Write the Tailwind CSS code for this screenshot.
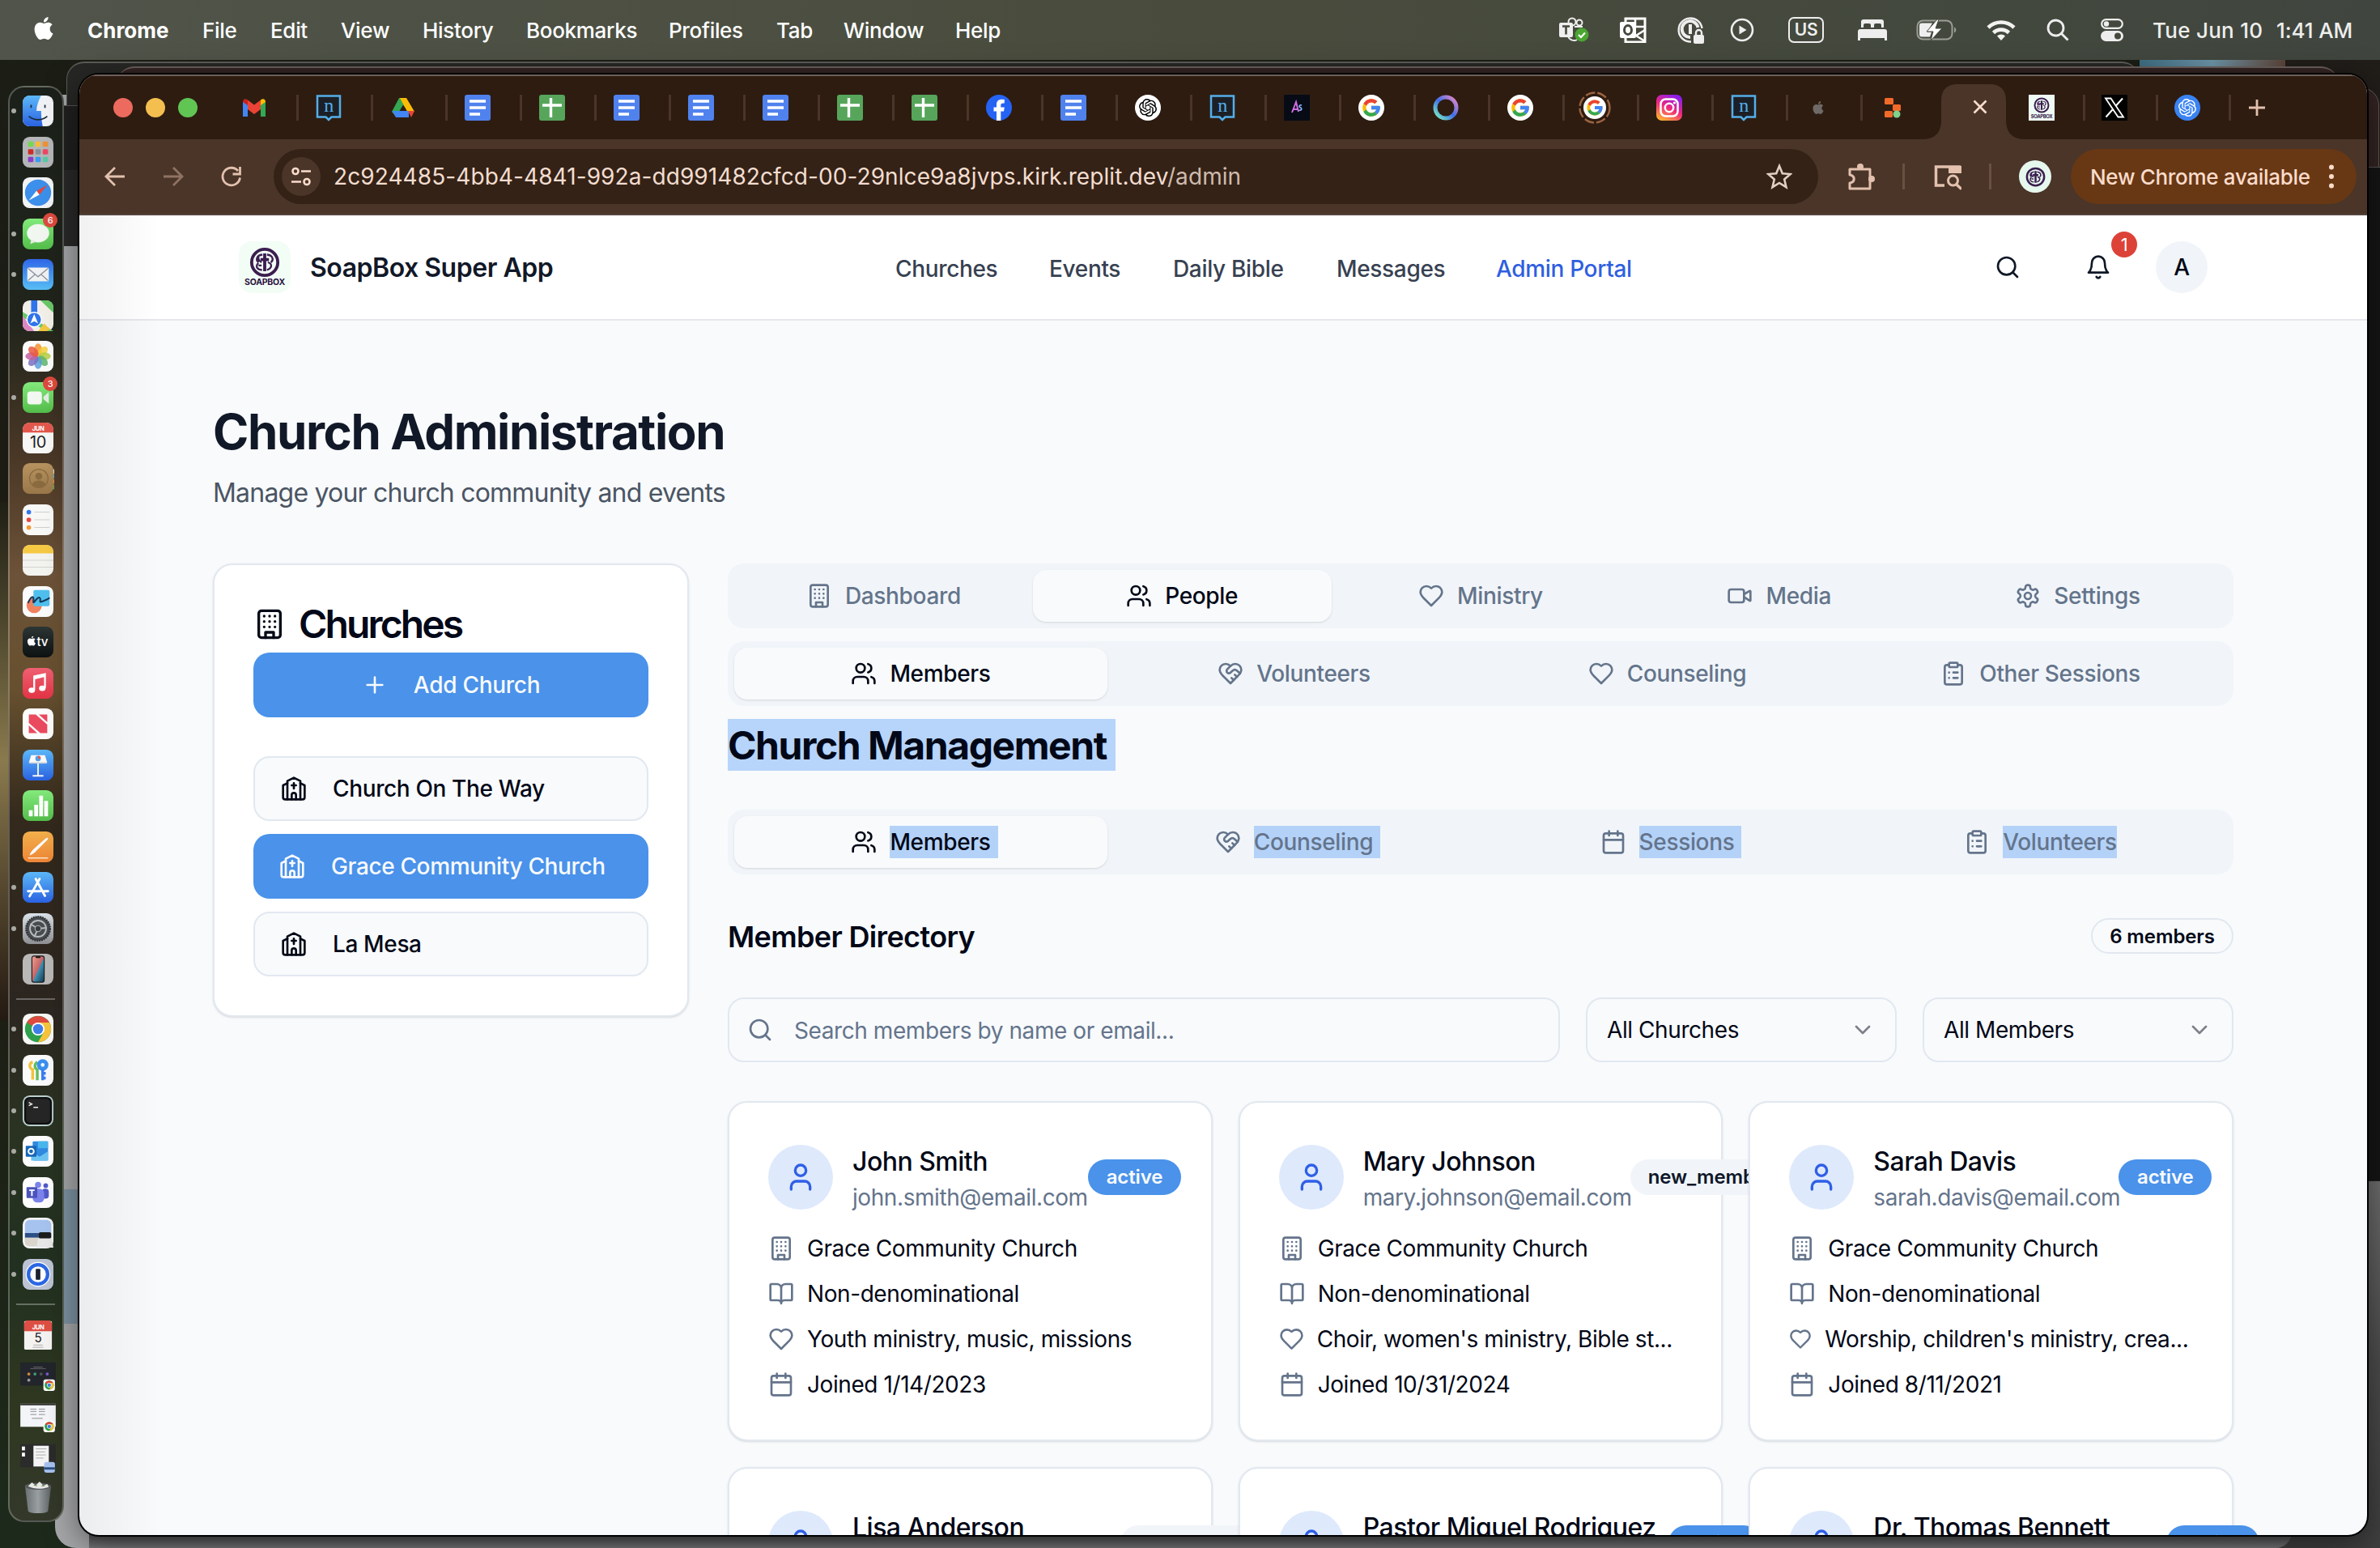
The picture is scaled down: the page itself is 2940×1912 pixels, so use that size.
<!DOCTYPE html>
<html lang="en">
<head>
<meta charset="utf-8">
<title>SoapBox Super App</title>
<script src="https://cdn.jsdelivr.net/npm/@tailwindcss/browser@4"></script>
</head>
<body class="relative h-[1912px] w-[2940px] overflow-hidden bg-[#15170f] font-['Inter',sans-serif] text-[28px] tracking-[-0.015em] text-[#020817]">

<!-- Icon sprite -->
<svg class="absolute size-0">
  <defs>
    <linearGradient id="gBlue" x1="0" y1="0" x2="0" y2="1"><stop offset="0" stop-color="#5cb8f8"/><stop offset="1" stop-color="#2a62e2"/></linearGradient>
    <linearGradient id="gBlueR" x1="0" y1="0" x2="0" y2="1"><stop offset="0" stop-color="#2f67e8"/><stop offset="1" stop-color="#58bff6"/></linearGradient>
    <linearGradient id="gGreen" x1="0" y1="0" x2="0" y2="1"><stop offset="0" stop-color="#83ea7c"/><stop offset="1" stop-color="#53bd4a"/></linearGradient>
    <linearGradient id="gRed" x1="0" y1="0" x2="0" y2="1"><stop offset="0" stop-color="#ee6072"/><stop offset="1" stop-color="#e33445"/></linearGradient>
    <linearGradient id="gOrange" x1="0" y1="0" x2="0" y2="1"><stop offset="0" stop-color="#f2b04b"/><stop offset="1" stop-color="#ee8536"/></linearGradient>
    <linearGradient id="gTan" x1="0" y1="0" x2="0" y2="1"><stop offset="0" stop-color="#b6935f"/><stop offset="1" stop-color="#9a7749"/></linearGradient>
    <linearGradient id="gGray" x1="0" y1="0" x2="0" y2="1"><stop offset="0" stop-color="#dbe2e9"/><stop offset="1" stop-color="#8f8f92"/></linearGradient>
    <linearGradient id="gTrash" x1="0" y1="0" x2="1" y2="0"><stop offset="0" stop-color="#6a6f71"/><stop offset=".5" stop-color="#9a9fa1"/><stop offset="1" stop-color="#5c6163"/></linearGradient>
    <linearGradient id="gTv" x1="0" y1="0" x2="0" y2="1"><stop offset="0" stop-color="#2c3634"/><stop offset="1" stop-color="#0d1112"/></linearGradient>
    <linearGradient id="gInsta" x1=".7" y1="0" x2=".2" y2="1"><stop offset="0" stop-color="#8a1df2"/><stop offset=".5" stop-color="#f0287c"/><stop offset="1" stop-color="#fdb62f"/></linearGradient>
    <linearGradient id="gRing" x1="1" y1="0" x2="0" y2="1"><stop offset="0" stop-color="#f28ac8"/><stop offset=".5" stop-color="#3f6fe8"/><stop offset="1" stop-color="#7df3c0"/></linearGradient>
    <linearGradient id="gPhone" x1="0" y1="0" x2="1" y2="1"><stop offset="0" stop-color="#f3a08c"/><stop offset=".5" stop-color="#c2646a"/><stop offset=".55" stop-color="#3d90b0"/><stop offset="1" stop-color="#15364f"/></linearGradient>
  </defs>
  <symbol id="building" viewBox="0 0 24 24"><rect width="16" height="20" x="4" y="2" rx="2"/><path d="M9 22v-4h6v4M8 6h.01M16 6h.01M12 6h.01M12 10h.01M12 14h.01M16 10h.01M16 14h.01M8 10h.01M8 14h.01"/></symbol>
  <symbol id="users" viewBox="0 0 24 24"><path d="M16 21v-2a4 4 0 0 0-4-4H6a4 4 0 0 0-4 4v2"/><circle cx="9" cy="7" r="4"/><path d="M22 21v-2a4 4 0 0 0-3-3.87M16 3.13a4 4 0 0 1 0 7.75"/></symbol>
  <symbol id="user" viewBox="0 0 24 24"><path d="M19 21v-2a4 4 0 0 0-4-4H9a4 4 0 0 0-4 4v2"/><circle cx="12" cy="7" r="4"/></symbol>
  <symbol id="heart" viewBox="0 0 24 24"><path d="M19 14c1.49-1.46 3-3.21 3-5.5A5.5 5.5 0 0 0 16.5 3c-1.76 0-3 .5-4.5 2-1.5-1.5-2.74-2-4.5-2A5.5 5.5 0 0 0 2 8.5c0 2.3 1.5 4.05 3 5.5l7 7Z"/></symbol>
  <symbol id="handshake" viewBox="0 0 24 24"><path d="M19 14c1.49-1.46 3-3.21 3-5.5A5.5 5.5 0 0 0 16.5 3c-1.76 0-3 .5-4.5 2-1.5-1.5-2.74-2-4.5-2A5.5 5.5 0 0 0 2 8.5c0 2.3 1.5 4.05 3 5.5l7 7Z"/><path d="M12 5 9.04 7.96a2.17 2.17 0 0 0 0 3.08c.82.82 2.13.85 3 .07l2.07-1.9a2.82 2.82 0 0 1 3.79 0l2.96 2.66M18 15l-2-2M15 18l-2-2"/></symbol>
  <symbol id="video" viewBox="0 0 24 24"><path d="m16 13 5.223 3.482a.5.5 0 0 0 .777-.416V7.87a.5.5 0 0 0-.752-.432L16 10.5"/><rect x="2" y="6" width="14" height="12" rx="2"/></symbol>
  <symbol id="settings" viewBox="0 0 24 24"><path d="M12.22 2h-.44a2 2 0 0 0-2 2v.18a2 2 0 0 1-1 1.73l-.43.25a2 2 0 0 1-2 0l-.15-.08a2 2 0 0 0-2.73.73l-.22.38a2 2 0 0 0 .73 2.73l.15.1a2 2 0 0 1 1 1.72v.51a2 2 0 0 1-1 1.74l-.15.09a2 2 0 0 0-.73 2.73l.22.38a2 2 0 0 0 2.73.73l.15-.08a2 2 0 0 1 2 0l.43.25a2 2 0 0 1 1 1.73V20a2 2 0 0 0 2 2h.44a2 2 0 0 0 2-2v-.18a2 2 0 0 1 1-1.73l.43-.25a2 2 0 0 1 2 0l.15.08a2 2 0 0 0 2.73-.73l.22-.39a2 2 0 0 0-.73-2.73l-.15-.08a2 2 0 0 1-1-1.74v-.5a2 2 0 0 1 1-1.74l.15-.09a2 2 0 0 0 .73-2.73l-.22-.38a2 2 0 0 0-2.73-.73l-.15.08a2 2 0 0 1-2 0l-.43-.25a2 2 0 0 1-1-1.73V4a2 2 0 0 0-2-2z"/><circle cx="12" cy="12" r="3"/></symbol>
  <symbol id="clipboard" viewBox="0 0 24 24"><rect width="8" height="4" x="8" y="2" rx="1"/><path d="M16 4h2a2 2 0 0 1 2 2v14a2 2 0 0 1-2 2H6a2 2 0 0 1-2-2V6a2 2 0 0 1 2-2h2M12 11h4M12 16h4M8 11h.01M8 16h.01"/></symbol>
  <symbol id="calendar" viewBox="0 0 24 24"><path d="M8 2v4M16 2v4M3 10h18"/><rect width="18" height="18" x="3" y="4" rx="2"/></symbol>
  <symbol id="book" viewBox="0 0 24 24"><path d="M12 7v14M3 18a1 1 0 0 1-1-1V4a1 1 0 0 1 1-1h5a4 4 0 0 1 4 4 4 4 0 0 1 4-4h5a1 1 0 0 1 1 1v13a1 1 0 0 1-1 1h-6a3 3 0 0 0-3 3 3 3 0 0 0-3-3z"/></symbol>
  <symbol id="church" viewBox="0 0 24 24"><path d="m18 7 4 2v11a2 2 0 0 1-2 2H4a2 2 0 0 1-2-2V9l4-2"/><path d="M14 22v-4a2 2 0 0 0-4 0v4M18 22V5l-6-3-6 3v17M12 7v5M10 9h4"/></symbol>
  <symbol id="search" viewBox="0 0 24 24"><circle cx="11" cy="11" r="8"/><path d="m21 21-4.3-4.3"/></symbol>
  <symbol id="bell" viewBox="0 0 24 24"><path d="M6 8a6 6 0 0 1 12 0c0 7 3 9 3 9H3s3-2 3-9M10.3 21a1.94 1.94 0 0 0 3.4 0"/></symbol>
  <symbol id="chevron" viewBox="0 0 24 24"><path d="m6 9 6 6 6-6"/></symbol>
  <symbol id="plus" viewBox="0 0 24 24"><path d="M5 12h14M12 5v14"/></symbol>
  <symbol id="apple" viewBox="0 0 24 24"><path d="M12.152 6.896c-.948 0-2.415-1.078-3.96-1.04-2.04.027-3.91 1.183-4.961 3.014-2.117 3.675-.546 9.103 1.519 12.09 1.013 1.454 2.208 3.09 3.792 3.039 1.52-.065 2.09-.987 3.935-.987 1.831 0 2.35.987 3.96.948 1.637-.026 2.676-1.48 3.676-2.948 1.156-1.688 1.636-3.325 1.662-3.415-.039-.013-3.182-1.221-3.22-4.857-.026-3.04 2.48-4.494 2.597-4.559-1.429-2.09-3.623-2.324-4.39-2.376-2-.156-3.675 1.09-4.61 1.09zM15.53 3.83c.843-1.012 1.4-2.427 1.245-3.83-1.207.052-2.662.805-3.532 1.818-.78.896-1.454 2.338-1.273 3.714 1.338.104 2.715-.688 3.559-1.701"/></symbol>
  <symbol id="knot" viewBox="0 0 24 24"><path d="M22.2819 9.8211a5.9847 5.9847 0 0 0-.5157-4.9108 6.0462 6.0462 0 0 0-6.5098-2.9A6.0651 6.0651 0 0 0 4.9807 4.1818a5.9847 5.9847 0 0 0-3.9977 2.9 6.0462 6.0462 0 0 0 .7427 7.0966 5.98 5.98 0 0 0 .511 4.9107 6.051 6.051 0 0 0 6.5146 2.9001A5.9847 5.9847 0 0 0 13.2599 24a6.0557 6.0557 0 0 0 5.7718-4.2058 5.9894 5.9894 0 0 0 3.9977-2.9001 6.0557 6.0557 0 0 0-.7475-7.0729zm-9.022 12.6081a4.4755 4.4755 0 0 1-2.8764-1.0408l.1419-.0804 4.7783-2.7582a.7948.7948 0 0 0 .3927-.6813v-6.7369l2.02 1.1686a.071.071 0 0 1 .038.052v5.5826a4.504 4.504 0 0 1-4.4945 4.4944zm-9.6607-4.1254a4.4708 4.4708 0 0 1-.5346-3.0137l.142.0852 4.783 2.7582a.7712.7712 0 0 0 .7806 0l5.8428-3.3685v2.3324a.0804.0804 0 0 1-.0332.0615L9.74 19.9502a4.4992 4.4992 0 0 1-6.1408-1.6464zM2.3408 7.8956a4.485 4.485 0 0 1 2.3655-1.9728V11.6a.7664.7664 0 0 0 .3879.6765l5.8144 3.3543-2.0201 1.1685a.0757.0757 0 0 1-.071 0l-4.8303-2.7865A4.504 4.504 0 0 1 2.3408 7.872zm16.5963 3.8558L13.1038 8.364 15.1192 7.2a.0757.0757 0 0 1 .071 0l4.8303 2.7913a4.4944 4.4944 0 0 1-.6765 8.1042v-5.6772a.79.79 0 0 0-.407-.667zm2.0107-3.0231l-.142-.0852-4.7735-2.7818a.7759.7759 0 0 0-.7854 0L9.409 9.2297V6.8974a.0662.0662 0 0 1 .0284-.0615l4.8303-2.7866a4.4992 4.4992 0 0 1 6.6802 4.66zM8.3065 12.863l-2.02-1.1638a.0804.0804 0 0 1-.038-.0567V6.0742a4.4992 4.4992 0 0 1 7.3757-3.4537l-.142.0805L8.704 5.459a.7948.7948 0 0 0-.3927.6813zm1.0976-2.3654l2.602-1.4998 2.6069 1.4998v2.9994l-2.5974 1.4997-2.6067-1.4997Z"/></symbol>
  <symbol id="google" viewBox="0 0 48 48"><path fill="#FBBC05" d="M43.611 20.083H42V20H24v8h11.303c-1.649 4.657-6.08 8-11.303 8-6.627 0-12-5.373-12-12s5.373-12 12-12c3.059 0 5.842 1.154 7.961 3.039l5.657-5.657C34.046 6.053 29.268 4 24 4 12.955 4 4 12.955 4 24s8.955 20 20 20 20-8.955 20-20c0-1.341-.138-2.65-.389-3.917z"/><path fill="#EA4335" d="m6.306 14.691 6.571 4.819C14.655 15.108 18.961 12 24 12c3.059 0 5.842 1.154 7.961 3.039l5.657-5.657C34.046 6.053 29.268 4 24 4 16.318 4 9.656 8.337 6.306 14.691z"/><path fill="#34A853" d="M24 44c5.166 0 9.86-1.977 13.409-5.192l-6.19-5.238A11.91 11.91 0 0 1 24 36c-5.202 0-9.619-3.317-11.283-7.946l-6.522 5.025C9.505 39.556 16.227 44 24 44z"/><path fill="#4285F4" d="M43.611 20.083H42V20H24v8h11.303a12.04 12.04 0 0 1-4.087 5.571l6.193 5.236C36.971 39.205 44 34 44 24c0-1.341-.138-2.65-.389-3.917z"/></symbol>
  <symbol id="crest" viewBox="0 0 40 40"><circle cx="20" cy="20" r="17" fill="none" stroke="#3b1d4f" stroke-width="4"/><path fill="none" stroke="#3b1d4f" stroke-width="2.400" d="M17 10c-8 1-9 7-5 10M12 12.500c-1 4 1 6 4 7.500M16.500 30c-3 0-5-1-6.500-3M23 10c8 1 9 7 5 10M28 12.500M24 20c5 1 7 7-1 10M12 21c-2 1-3 4-2 6M16 24h-4"/><path stroke="#3b1d4f" stroke-width="4" d="M20 8.500v23M14.500 16.500h11"/></symbol>
  <symbol id="chromeball" viewBox="0 0 40 40"><circle cx="20" cy="20" r="17" fill="#2fa04e"/><path fill="#dd4b3e" d="M20 20 5.300 11.500A17 17 0 0 1 34.700 11.500H20z"/><path fill="#f7c53c" d="M20 11.500h14.700A17 17 0 0 1 20 37l7.400-12.800z"/><circle cx="20" cy="20" r="8.500" fill="#fff"/><circle cx="20" cy="20" r="6.600" fill="#3f7ee8"/></symbol>
</svg>

<!-- Wallpaper -->
<div class="absolute inset-0 bg-linear-to-b from-[#1b1e15] via-[#1c1a12] to-[#1d2a1b]"></div>
<div class="absolute top-[620px] left-0 h-[640px] w-[12px] bg-linear-to-b from-[#1f1f14] via-[#8a7a4e] to-[#241a12]"></div>
<div class="absolute top-[74px] left-[2643px] h-[20px] w-[180px] bg-linear-to-r from-[#3d6c80] via-[#6b93a6] to-[#5a4338]"></div>
<div class="absolute top-[74px] left-[2823px] h-[60px] w-[117px] bg-[#211d19]"></div>

<!-- Windows stacked behind the browser -->
<div class="absolute top-[108px] left-[2600px] h-[600px] w-[339px] rounded-tr-[22px] border border-[#655a56] bg-[#332423]"></div>
<div class="absolute top-[206px] left-[2600px] h-[1252px] w-[340px] border-t border-[#555] bg-[#151515]"></div>
<div class="absolute top-[1458px] left-[2600px] h-[454px] w-[340px] border-t border-[#222] bg-linear-to-b from-[#6d6d6d] via-[#4c4c4c] to-[#3f3f3f]"></div>
<div class="absolute top-[117px] left-[68px] h-[1795px] w-[2763px] rounded-b-[26px] bg-linear-to-r from-[#a6a7a9] to-[#86888a]"></div>
<div class="absolute top-[1469px] left-[68px] h-[166px] w-[60px] bg-[#7d93a2]"></div>
<div class="absolute top-[1890px] left-[110px] h-[22px] w-[2721px] rounded-br-[20px] bg-linear-to-b from-[#3c3d3e] to-[#77787a]"></div>
<div class="absolute top-[130px] left-[70px] h-[80px] w-[60px] border-t border-[#555] bg-[#202020]"></div>
<div class="absolute top-[210px] left-[70px] h-[94px] w-[60px] bg-[#292929]"></div>
<div class="absolute top-[76px] left-[82px] h-[54px] w-[2561px] rounded-t-[22px] border-t-2 border-l border-[#5b5b58] bg-[#272725]"></div>
<div class="absolute top-[82px] left-[144px] h-[40px] w-[2745px] rounded-t-[22px] border-t-2 border-[#6a5f5c] bg-[#332423]"></div>

<!-- Menu bar -->
<header class="absolute inset-x-0 top-0 flex h-[74px] items-center bg-linear-to-r from-[#50544a] via-[#494c3c] to-[#40463f] pr-[33px] pl-[40px] text-[26px] font-medium tracking-[-0.012em] whitespace-nowrap text-white">
  <svg class="mt-[-4px] h-[32px] w-[28px] fill-white"><use href="#apple"/></svg>
  <nav class="ml-[40px] flex">
    <span class="w-[142px] font-bold tracking-normal">Chrome</span>
    <span class="w-[84px]">File</span>
    <span class="w-[87px]">Edit</span>
    <span class="w-[101px]">View</span>
    <span class="w-[128px]">History</span>
    <span class="w-[176px]">Bookmarks</span>
    <span class="w-[133px]">Profiles</span>
    <span class="w-[83px]">Tab</span>
    <span class="w-[138px]">Window</span>
    <span>Help</span>
  </nav>
  <div class="ml-auto flex items-center text-[#eeeeec]">
    <svg class="h-[32px] w-[38px]" viewBox="0 0 38 32"><circle cx="17" cy="6" r="4.500" fill="none" stroke="#eee" stroke-width="2"/><circle cx="26" cy="7" r="3.500" fill="none" stroke="#eee" stroke-width="2"/><path d="M12 24c2 5 8 6 11 4M20 12h10" fill="none" stroke="#eee" stroke-width="2"/><rect x="1" y="7" width="17" height="18" rx="2" fill="#eee"/><path d="M5 11.500h9M9.500 11.500v10" stroke="#44483d" stroke-width="2.600"/><circle cx="29" cy="22" r="8.500" fill="#4aa531"/><path d="m25 22 3 3 5-5.500" fill="none" stroke="#fff" stroke-width="2.200"/></svg>
    <svg class="ml-[38px] h-[32px] w-[34px]" viewBox="0 0 34 32"><path d="M8 2h23v29H7V2z" fill="none" stroke="#fff" stroke-width="3"/><path d="M19 2v10h12M31 16l-11 7 11 7" fill="none" stroke="#fff" stroke-width="2.500"/><rect x="0" y="6" width="20" height="20" rx="2" fill="#fff"/><ellipse cx="10" cy="16" rx="4.500" ry="5.500" fill="none" stroke="#44483d" stroke-width="3"/></svg>
    <svg class="ml-[36px] h-[34px] w-[34px]" viewBox="0 0 34 34"><path d="M18 31.500A14.500 14.500 0 1 1 31.500 15" fill="none" stroke="#eee" stroke-width="2.400"/><path d="M17 26A10 10 0 1 1 26.500 14" fill="none" stroke="#eee" stroke-width="4"/><path d="M17 10v12" stroke="#eee" stroke-width="4"/><rect x="21" y="23" width="13" height="11" rx="2" fill="#eee"/><path d="M24 24v-3.500a3.500 3.500 0 0 1 7 0V24" fill="none" stroke="#eee" stroke-width="2.400"/></svg>
    <svg class="ml-[32px] h-[30px] w-[30px]" viewBox="0 0 30 30"><circle cx="15" cy="15" r="13" fill="none" stroke="#eee" stroke-width="2.600"/><path d="M11.500 9.500v11l9-5.500z" fill="#eee"/></svg>
    <span class="ml-[42px] flex h-[32px] w-[44px] items-center justify-center rounded-[7px] border-[2.5px] border-[#eee] text-[21px] font-semibold">US</span>
    <svg class="ml-[42px] h-[26px] w-[36px] fill-[#eee]" viewBox="0 0 36 26"><path d="M4 10V3a3 3 0 0 1 3-3h22a3 3 0 0 1 3 3v7h-3V7a2 2 0 0 0-2-2h-5a2 2 0 0 0-2 2v3h-4V7a2 2 0 0 0-2-2H9a2 2 0 0 0-2 2v3zM0 15a3 3 0 0 1 3-3h30a3 3 0 0 1 3 3v11h-3v-3H3v3H0z"/></svg>
    <svg class="ml-[36px] h-[28px] w-[50px]" viewBox="0 0 50 28"><rect x="1.500" y="2.500" width="43" height="23" rx="7" fill="none" stroke="#9b9e96" stroke-width="2"/><path d="M47 10.500c3 1 3 6 0 7z" fill="#9b9e96"/><path d="M7 5.500h13l-6 11h5l-2 6H7a3 3 0 0 1-3-3v-11a3 3 0 0 1 3-3z" fill="#eee"/><path d="M26 1 13 16h8l-3 11 14-15h-8L28 1z" fill="#fff" stroke="#44483d" stroke-width="1"/></svg>
    <svg class="ml-[37px] h-[26px] w-[36px]" viewBox="0 0 36 26" fill="none" stroke="#f2f2f0" stroke-width="4.600"><path d="M2 10a23 23 0 0 1 32 0"/><path d="M8.500 16.500a13.500 13.500 0 0 1 19 0"/><path d="M18 26l-5-5.500a7 7 0 0 1 10 0z" fill="#f2f2f0" stroke="none"/></svg>
    <svg class="ml-[38px] h-[28px] w-[28px]" viewBox="0 0 28 28" fill="none" stroke="#eee" stroke-width="2.800"><circle cx="11.500" cy="11.500" r="9.500"/><path d="m18.500 18.500 8 8"/></svg>
    <svg class="ml-[39px] h-[28px] w-[28px]" viewBox="0 0 28 28"><rect x="1.200" y="1.200" width="25.600" height="10.600" rx="5.300" fill="none" stroke="#eee" stroke-width="2.200"/><circle cx="7" cy="6.500" r="3.200" fill="#eee"/><rect y="15" width="28" height="13" rx="6.500" fill="#eee"/><circle cx="21" cy="21.500" r="4" fill="#44483d"/></svg>
    <span class="ml-[36px] w-[153px] tracking-[0.010em]">Tue Jun 10</span><span class="w-[95px] tracking-[-0.005em]">1:41 AM</span>
  </div>
</header>

<!-- Dock -->
<aside id="dock" class="absolute top-[106px] left-[10px] flex h-[1774px] w-[69px] flex-col rounded-[20px] border-2 border-white/25 bg-[linear-gradient(to_bottom,#1b211a_0%,#20241b_16%,#4b3827_26%,#6c5238_34%,#67502f_42%,#33291c_51%,#2c2620_64%,#2a3322_73%,#213020_82%,#2f3720_92%,#33382a_100%)] pt-[4px]"></aside>

<!-- Browser window -->
<main class="absolute top-[92px] left-[98px] flex h-[1804px] w-[2826px] flex-col overflow-hidden rounded-[24px] bg-[#f8fafc] shadow-[0_0_0_2px_#000,0_10px_40px_rgba(0,0,0,0.5)]">
  <div class="flex h-[80px] shrink-0 items-center border-t-2 border-[#6d6059] bg-[#2e1c11] pl-[42px]">
    <i class="size-[24px] rounded-full bg-[#ec6a5e]"></i>
    <i class="ml-[16px] size-[24px] rounded-full bg-[#f4bf4f]"></i>
    <i class="ml-[16px] size-[24px] rounded-full bg-[#61c554]"></i>
    <div id="tabs" class="ml-[33px] flex h-full items-center"></div>
    <svg class="h-[68px] w-[128px] self-end" viewBox="0 0 128 68"><path d="M0 68c16 0 24-8 24-24V20C24 7 31 0 44 0h40c13 0 20 7 20 20v24c0 16 8 24 24 24z" fill="#4a3528"/><path d="m64.500 20.500 15 15M79.500 20.500l-15 15" stroke="#fbdccb" stroke-width="2.600"/></svg>
    <div class="flex w-[74px] items-center justify-between pl-[4px]"><span class="flex size-[32px] flex-col items-center bg-[#eefaf3] pt-[3px]"><svg class="size-[20px]"><use href="#crest"/></svg><b class="text-[6px] leading-[7px] text-[#3b1d4f]">SOAPBOX</b></span><i class="h-[32px] w-[3px] bg-[#4a3528]"></i></div>
    <div class="flex w-[90px] items-center justify-between pl-[20px]"><svg class="size-[32px] bg-black" viewBox="0 0 32 32"><path d="M5 4.500h6.500L27 27.500h-6.500z" fill="none" stroke="#fff" stroke-width="1.800"/><path d="M26 4.500 17.500 14M13.500 18.500l-8 9" stroke="#fff" stroke-width="2"/></svg><i class="h-[32px] w-[3px] bg-[#4a3528]"></i></div>
    <div class="flex w-[90px] items-center justify-between pl-[20px]"><span class="flex size-[32px] items-center justify-center rounded-full bg-[#3a83f2]"><svg class="size-[22px] fill-white"><use href="#knot"/></svg></span><i class="h-[32px] w-[3px] bg-[#4a3528]"></i></div>
    <svg class="ml-[22px] size-[20px]" viewBox="0 0 20 20"><path d="M0 10h20M10 0v20" stroke="#e3c1ae" stroke-width="2.800"/></svg>
  </div>

  <div class="flex h-[94px] shrink-0 items-center border-b-2 border-[#53443c] bg-[#4a3528] pl-[28px]">
    <svg class="size-[32px]" viewBox="0 0 32 32" fill="none" stroke="#e3c1ae" stroke-width="2.800"><path d="M28 16H6M16 5 5 16l11 11"/></svg>
    <svg class="ml-[40px] size-[32px]" viewBox="0 0 32 32" fill="none" stroke="#8f7362" stroke-width="2.800"><path d="M4 16h22M16 5l11 11-11 11"/></svg>
    <svg class="ml-[40px] size-[32px]" viewBox="0 0 32 32" fill="none" stroke="#e3c1ae" stroke-width="2.800"><path d="M26.500 17.500A10.800 10.800 0 1 1 24 9"/><path d="M26.500 4v9h-9"/></svg>
    <div class="ml-[36px] flex h-[68px] w-[1908px] items-center rounded-full bg-[#342216] pr-[32px] pl-[10px]">
      <span class="flex size-[48px] items-center justify-center rounded-full bg-[#4a3528]"><svg class="size-[26px]" viewBox="0 0 26 26" fill="none" stroke="#fbdccb" stroke-width="2.600"><circle cx="6" cy="6.500" r="3.500"/><path d="M13 6.500h12M1 19.500h12"/><circle cx="20" cy="19.500" r="3.500"/></svg></span>
      <span class="ml-[16px] text-[28px] tracking-[0.003em] text-[#f3ddd0]">2c924485-4bb4-4841-992a-dd991482cfcd-00-29nlce9a8jvps.kirk.replit.dev<span class="text-[#cfbbae]">/admin</span></span>
      <svg class="ml-auto size-[32px]" viewBox="0 0 32 32" fill="none" stroke="#e3cfc3" stroke-width="2.600"><path d="m16 3 3.800 9.200 9.900.8-7.500 6.500 2.300 9.700L16 24l-8.500 5.200 2.300-9.700L2.300 13l9.900-.8z"/></svg>
    </div>
    <svg class="ml-[36px] size-[34px]" viewBox="0 0 34 34"><path fill="none" stroke="#e3c1ae" stroke-width="3" stroke-linejoin="round" d="M3 8h25v24H3v-7c7-1 7-9 0-10z"/><circle cx="16" cy="5" r="4" fill="#e3c1ae"/><circle cx="30" cy="20" r="4" fill="#e3c1ae"/></svg>
    <i class="ml-[34px] h-[32px] w-[3px] bg-[#6a5040]"></i>
    <svg class="ml-[36px] size-[34px]" viewBox="0 0 34 34"><path fill="none" stroke="#e3c1ae" stroke-width="3.500" d="M13 28H2.500V5H33"/><path d="M18 4h16v9H18z" fill="#e3c1ae"/><circle cx="23.500" cy="22" r="6" fill="none" stroke="#e3c1ae" stroke-width="3"/><path d="m28 27 6 5.500" stroke="#e3c1ae" stroke-width="3.500"/></svg>
    <i class="ml-[34px] h-[32px] w-[3px] bg-[#6a5040]"></i>
    <span class="ml-[34px] flex size-[40px] items-center justify-center rounded-full bg-[#e6f7ee]"><svg class="size-[25px]"><use href="#crest"/></svg></span>
    <div class="ml-[24px] flex h-[68px] w-[353px] items-center rounded-full bg-[#683814] pl-[24px] text-[26px] font-medium whitespace-nowrap text-[#fbdccb]">
      <span class="w-[285px] tracking-[-0.012em]">New Chrome available</span>
      <svg class="ml-[10px] h-[30px] w-[6px] fill-[#fbdccb]" viewBox="0 0 6 30"><circle cx="3" cy="3.500" r="3"/><circle cx="3" cy="15" r="3"/><circle cx="3" cy="26.500" r="3"/></svg>
    </div>
  </div>

  <div class="flex h-[130px] shrink-0 items-center border-b-2 border-[#e5e7eb] bg-white pr-[197px] pl-[197px]">
    <span class="flex size-[64px] flex-col items-center rounded-[16px] bg-[#f2fdf6] pt-[7px]"><svg class="size-[38px]"><use href="#crest"/></svg><b class="mt-px text-[10.500px] leading-[10px] tracking-[-0.020em] text-[#2a1340]">SOAPBOX</b></span>
    <b class="ml-[24px] w-[723px] pt-[2px] text-[32px] font-semibold tracking-[-0.015em] text-[#111827]">SoapBox Super App</b>
    <nav class="flex pt-[3px] font-medium tracking-[-0.012em] whitespace-nowrap text-[#374151]">
      <span class="w-[190px]">Churches</span><span class="w-[153px]">Events</span><span class="w-[202px]">Daily Bible</span><span class="w-[197px]">Messages</span><span class="text-[#2f5fdf]">Admin Portal</span>
    </nav>
    <div class="ml-auto flex items-center">
      <svg class="size-[32px] fill-none stroke-[#111827] stroke-2" stroke-linecap="round" stroke-linejoin="round"><use href="#search"/></svg>
      <span class="relative ml-[80px]"><svg class="size-[32px] fill-none stroke-[#111827] stroke-2" stroke-linecap="round" stroke-linejoin="round"><use href="#bell"/></svg><i class="absolute top-[-28px] left-[32px] flex size-[32px] items-center justify-center rounded-full bg-[#dd4238] text-[22px] text-white not-italic">1</i></span>
      <span class="ml-[55px] flex size-[64px] items-center justify-center rounded-full bg-[#f1f5f9] font-medium">A</span>
    </div>
  </div>

  <div class="pt-[101px] pl-[165px]">
    <h1 class="text-[60px] leading-[72px] font-bold tracking-[-0.023em] text-[#111827]">Church Administration</h1>
    <p class="mt-[16px] text-[32px] leading-[48px] tracking-[-0.025em] text-[#4b5563]">Manage your church community and events</p>

    <div class="mt-[63px] flex items-start gap-[48px]">
      <section class="h-[560px] w-[588px] shrink-0 rounded-[24px] border-2 border-[#e2e8f0] bg-white px-[48px] pt-[49px] shadow-sm">
        <h2 class="flex h-[48px] items-center text-[48px] leading-[48px] font-semibold tracking-[-0.060em]"><svg class="mr-[16px] size-[40px] fill-none stroke-current stroke-2" stroke-linecap="round" stroke-linejoin="round"><use href="#building"/></svg>Churches</h2>
        <button class="mt-[11px] flex h-[80px] w-[488px] items-center justify-center gap-[32px] rounded-[20px] bg-[#4a92ea] font-medium tracking-[-0.010em] text-[#f8fafc]"><svg class="size-[32px] fill-none stroke-current stroke-2" stroke-linecap="round"><use href="#plus"/></svg>Add Church</button>
        <div class="mt-[48px] flex flex-col gap-[16px] font-medium tracking-[-0.013em]">
          <div class="flex h-[80px] w-[488px] items-center gap-[32px] rounded-[20px] border-2 border-[#e2e8f0] bg-[#f8fafc] pl-[32px]"><svg class="size-[32px] fill-none stroke-current stroke-2" stroke-linecap="round" stroke-linejoin="round"><use href="#church"/></svg>Church On The Way</div>
          <div class="flex h-[80px] w-[488px] items-center gap-[32px] rounded-[20px] bg-[#4a92ea] pl-[32px] text-[#f8fafc]"><svg class="size-[32px] fill-none stroke-current stroke-2" stroke-linecap="round" stroke-linejoin="round"><use href="#church"/></svg>Grace Community Church</div>
          <div class="flex h-[80px] w-[488px] items-center gap-[32px] rounded-[20px] border-2 border-[#e2e8f0] bg-[#f8fafc] pl-[32px]"><svg class="size-[32px] fill-none stroke-current stroke-2" stroke-linecap="round" stroke-linejoin="round"><use href="#church"/></svg>La Mesa</div>
        </div>
      </section>

      <section class="w-[1860px] shrink-0">
        <div id="tabs1" class="grid h-[80px] grid-cols-5 rounded-[20px] bg-[#f1f5f9] p-[8px] font-medium tracking-[-0.012em] text-[#64748b]"></div>
        <div id="tabs2" class="mt-[16px] grid h-[80px] grid-cols-4 rounded-[20px] bg-[#f1f5f9] p-[8px] font-medium tracking-[-0.012em] text-[#64748b]"></div>
        <h2 class="mt-[16px] h-[64px] w-[479px] bg-[#b7d4fa] text-[48px] leading-[66px] font-bold tracking-[-0.030em] whitespace-nowrap">Church Management</h2>
        <div id="tabs3" class="mt-[48px] grid h-[80px] grid-cols-4 rounded-[20px] bg-[#f1f5f9] p-[8px] font-medium tracking-[-0.012em] text-[#64748b]"></div>
        <div class="mt-[48px] flex h-[56px] items-center justify-between">
          <h3 class="pt-px text-[36px] font-semibold tracking-[-0.018em]">Member Directory</h3>
          <span class="flex h-[44px] w-[176px] items-center justify-center rounded-full border-2 border-[#e2e8f0] pt-px text-[24px] font-semibold tracking-[-0.005em]">6 members</span>
        </div>
        <div class="mt-[48px] flex gap-[32px]">
          <div class="flex h-[80px] w-[1028px] items-center gap-[26px] rounded-[20px] border-2 border-[#e2e8f0] pl-[22px] text-[#64748b]"><svg class="size-[32px] fill-none stroke-current stroke-2" stroke-linecap="round"><use href="#search"/></svg><span class="pt-px">Search members by name or email...</span></div>
          <div class="flex h-[80px] flex-1 items-center justify-between rounded-[20px] border-2 border-[#e2e8f0] px-[24px]">All Churches<svg class="size-[32px] fill-none stroke-current stroke-2 opacity-50" stroke-linecap="round" stroke-linejoin="round"><use href="#chevron"/></svg></div>
          <div class="flex h-[80px] flex-1 items-center justify-between rounded-[20px] border-2 border-[#e2e8f0] px-[24px]">All Members<svg class="size-[32px] fill-none stroke-current stroke-2 opacity-50" stroke-linecap="round" stroke-linejoin="round"><use href="#chevron"/></svg></div>
        </div>
        <div id="members" class="mt-[48px] grid grid-cols-3 gap-[32px]"></div>
      </section>
    </div>
  </div>
  <div class="pointer-events-none absolute top-[174px] bottom-0 left-0 w-[100px] bg-linear-to-r from-black/[0.055] to-transparent"></div>
</main>

<script>
const icon = (id, cls = 'size-[32px]') => `<svg class="${cls} shrink-0 fill-none stroke-current stroke-2" stroke-linecap="round" stroke-linejoin="round"><use href="#${id}"/></svg>`;

// Section tabs: [icon, label, active]
const fillTabs = (id, items, mark) => {
  document.getElementById(id).innerHTML = items.map(([i, label, on], n) => `
    <div class="flex items-center justify-center gap-[16px] ${on ? 'rounded-[16px] bg-[#f8fafc] text-[#020817] shadow-sm' : ''}">${icon(i)}<span class="relative h-[40px] leading-[41px] ${mark ? 'bg-[#b4d2f8]' : ''}">${label}${mark && n < 3 ? '<i class="absolute top-0 left-full h-[40px] w-[9px] bg-[#b4d2f8]"></i>' : ''}</span></div>`).join('');
};
fillTabs('tabs1', [['building', 'Dashboard'], ['users', 'People', 1], ['heart', 'Ministry'], ['video', 'Media'], ['settings', 'Settings']]);
fillTabs('tabs2', [['users', 'Members', 1], ['handshake', 'Volunteers'], ['heart', 'Counseling'], ['clipboard', 'Other Sessions']]);
fillTabs('tabs3', [['users', 'Members', 1], ['handshake', 'Counseling'], ['calendar', 'Sessions'], ['clipboard', 'Volunteers']], true);

// Member cards
const members = [
  ['John Smith', 'john.smith@email.com', 'active', 'w-[291px]', 'Youth ministry, music, missions', '1/14/2023', 'w-[32px]'],
  ['Mary Johnson', 'mary.johnson@email.com', 'new_member', 'w-[330px]', "Choir, women's ministry, Bible st...", '10/31/2024', 'w-[31px]'],
  ['Sarah Davis', 'sarah.davis@email.com', 'active', 'w-[303px]', "Worship, children's ministry, crea...", '8/11/2021', 'w-[28px]'],
  ['Lisa Anderson', 'lisa.anderson@email.com', 'new_member', 'w-[331px]', 'Prayer ministry', '3/2/2022', 'w-[32px]'],
  ['Pastor Miguel Rodriguez', 'miguel.rodriguez@email.com', 'active', 'w-[377px]', 'Preaching', '5/9/2019', 'w-[32px]'],
  ['Dr. Thomas Bennett', 'thomas.bennett@email.com', 'active', 'w-[362px]', 'Teaching', '7/8/2020', 'w-[32px]'],
];
document.getElementById('members').innerHTML = members.map(([name, mail, state, w, interests, joined, hw]) => `
  <article class="relative h-[420px] rounded-[24px] border-2 border-[#e2e8f0] bg-white px-[48px] pt-[48px] shadow-sm">
    <div class="flex h-[88px] items-center whitespace-nowrap">
      <span class="flex size-[80px] shrink-0 items-center justify-center rounded-full bg-[#dee9fc] text-[#2f5fe6]">${icon('user', 'size-[40px]')}</span>
      <div class="ml-[24px] ${w} shrink-0 pt-px"><div class="text-[32px] leading-[48px] font-medium tracking-[-0.016em]">${name}</div><div class="leading-[40px] text-[#64748b]">${mail}</div></div>
      <span class="flex h-[44px] shrink-0 items-center justify-center rounded-full text-[24px] font-semibold tracking-[-0.005em] ${state === 'active' ? 'w-[115px] bg-[#4a92ea] text-[#f8fafc]' : 'bg-[#f1f5f9] px-[22px] text-[#0f172a]'}">${state}</span>
    </div>
    <div class="mt-[24px] flex flex-col gap-[16px] leading-[40px] whitespace-nowrap">
      <div class="flex items-center gap-[16px]"><span class="flex text-[#64748b]">${icon('building')}</span>Grace Community Church</div>
      <div class="flex items-center gap-[16px]"><span class="flex text-[#64748b]">${icon('book')}</span>Non-denominational</div>
      <div class="flex items-center gap-[16px]"><span class="flex text-[#64748b]">${icon('heart', hw + ' h-[32px]')}</span>${interests}</div>
      <div class="flex items-center gap-[16px]"><span class="flex text-[#64748b]">${icon('calendar')}</span>Joined ${joined}</div>
    </div>
  </article>`).join('');

// Browser tab favicons, drawn on a 32 x 32 grid
const fav = {
  gmail: '<path fill="#4285f4" d="M2 27V8l6 4.500V27z"/><path fill="#34a853" d="M24 27V12.500L30 8v19z"/><path fill="#ea4335" d="M8 18V6.500l8 6 8-6V18l-8 6z"/><path fill="#c5221f" d="M2 9c0-4 3.500-4.500 6-2.500V13z"/><path fill="#fbbc04" d="M30 9c0-4-3.500-4.500-6-2.500V13z"/>',
  next: '<path d="M2 1.500h28v26H19.500L16 31l-3.500-3.500H2z" fill="#1c2026" stroke="#54aeea" stroke-width="2.500"/><text x="16" y="20.500" text-anchor="middle" font-family="Liberation Serif" font-size="24" fill="#54aeea">n</text>',
  drive: '<path fill="#34a853" d="M11 4h6l4 7-9.500 11L7 27 2 21z"/><path fill="#fbbc04" d="M12 4h8l10 17H21z"/><path fill="#4285f4" d="M8 20h15v8H7l-4.500-8z"/><path fill="#ea4335" d="M22 20h8l-4 8z"/><path fill="#2e1c11" d="M16 12.500 20.500 20h-9z"/>',
  docs: '<rect width="32" height="32" rx="3" fill="#5082ee"/><path d="M6 8h20M6 16h20M6 24h13" stroke="#fff" stroke-width="3.600"/>',
  sheet: '<rect width="32" height="32" rx="3" fill="#56a55b"/><path d="M4 13h24M14.500 4v24" stroke="#fff" stroke-width="3.400"/>',
  fb: '<circle cx="16" cy="16" r="16" fill="#2563f4"/><path fill="#fff" d="M13 32V20.500H9.500V15.500H13V12c0-4.500 3-6.500 7-6.300l2.800.3v4.500H21c-2 0-2.700 1-2.700 2.500v2.500h4.500l-.8 5h-3.700V32z"/>',
  gpt: '<circle cx="16" cy="16" r="16" fill="#fff"/><svg x="5" y="5" width="22" height="22" fill="#000"><use href="#knot"/></svg>',
  as: '<rect width="32" height="32" fill="#060b16"/><path d="M10 22l5-13 3 12M12 18h6" fill="none" stroke="#d16be0" stroke-width="2"/><path d="M22 13c-3-1-4 2-1.500 3s1 4-2 3" fill="none" stroke="#8fb8ff" stroke-width="1.600"/>',
  g: '<circle cx="16" cy="16" r="16" fill="#fff"/><svg x="3" y="3" width="26" height="26"><use href="#google"/></svg>',
  ring: '<circle cx="16" cy="16" r="13" fill="none" stroke="url(#gRing)" stroke-width="5"/>',
  gd: '<circle cx="16" cy="16" r="14" fill="#fff"/><circle cx="16" cy="16" r="18.500" fill="none" stroke="#9b6440" stroke-width="2.400" stroke-dasharray="12 3"/><svg x="4.500" y="4.500" width="23" height="23"><use href="#google"/></svg>',
  insta: '<rect width="32" height="32" rx="7" fill="url(#gInsta)"/><g fill="none" stroke="#fff" stroke-width="2.500"><rect x="5.500" y="5.500" width="21" height="21" rx="6"/><circle cx="16" cy="16" r="5.200"/></g><circle cx="22.500" cy="10" r="1.600" fill="#fff"/>',
  apple: '<svg x="8" y="8" width="16" height="16" fill="#6f6a67"><use href="#apple"/></svg>',
  replit: '<g fill="#f26a2a"><rect x="6" y="4" width="11" height="8" rx="1.500"/><rect x="16" y="12" width="10" height="8" rx="1.500"/><rect x="6" y="20" width="10" height="8" rx="1.500"/></g><circle cx="21" cy="24" r="4.500" fill="#7fd38b"/>',
};
const order = ['gmail', 'next', 'drive', 'docs', 'sheet', 'docs', 'docs', 'docs', 'sheet', 'sheet', 'fb', 'docs', 'gpt', 'next', 'as', 'g', 'ring', 'g', 'gd', 'insta', 'next', 'apple', 'replit'];
document.getElementById('tabs').innerHTML = order.map((k, n) => `
  <div class="flex ${n < 22 ? 'w-[92px]' : 'w-[73px]'} shrink-0 items-center justify-between pl-[21px]"><svg class="size-[32px] overflow-visible" viewBox="0 0 32 32">${fav[k]}</svg>${n < 22 ? '<i class="h-[32px] w-[3px] bg-[#4a3528]"></i>' : ''}</div>`).join('');

// Dock icons, drawn on a 40 x 40 grid
const tile = (fill, inner) => `<rect width="40" height="40" rx="9" fill="${fill}"/>${inner}`;
const thumb = (fill, inner, badge) => `<rect x="-3" y="4" width="46" height="30" fill="${fill}"/>${inner}${badge}`;
const miniChrome = '<rect x="27" y="26" width="15" height="15" rx="3" fill="#fff"/><svg x="27.500" y="26.500" width="14" height="14"><use href="#chromeball"/></svg>';
const petals = ['#f2922f', '#f6cf3a', '#b5cf45', '#5cb56b', '#5aa0d8', '#7a6fc0', '#c45f9f', '#e8583f'].map((c, n) => `<ellipse cx="20" cy="11.500" rx="5" ry="8" fill="${c}" opacity=".85" transform="rotate(${n * 45} 20 20)"/>`).join('');
const dock = [
  [tile('#f0f2f5', '<path d="M9 0h15c-4 8-6 14-6 20h6c0 8 1 14 2 20H9a9 9 0 0 1-9-9V9a9 9 0 0 1 9-9z" fill="url(#gBlue)"/><path d="M11 12v4M29 12v4M8 27c7 6 17 6 24 0" fill="none" stroke="#1c2b3c" stroke-width="1.800"/>'), 1],
  [tile('#b4b6b8', '<g><rect x="7" y="6" width="7" height="7" rx="1.500" fill="#74d84f"/><rect x="16.500" y="6" width="7" height="7" rx="1.500" fill="#f4bb3c"/><rect x="26" y="6" width="7" height="7" rx="1.500" fill="#ee9236"/><rect x="7" y="16" width="7" height="7" rx="1.500" fill="#cf2c28"/><rect x="16.500" y="16" width="7" height="7" rx="1.500" fill="#8b9097"/><rect x="26" y="16" width="7" height="7" rx="1.500" fill="#ee4763"/><rect x="7" y="26" width="7" height="7" rx="1.500" fill="#8a3fc9"/><rect x="16.500" y="26" width="7" height="7" rx="1.500" fill="#399bf2"/><rect x="26" y="26" width="7" height="7" rx="1.500" fill="#5bc8a4"/></g>')],
  [tile('#f2f3f4', '<circle cx="20" cy="20" r="17" fill="#3c8fea"/><path d="M32 10 21.800 22.500 18 17.500z" fill="#e5453a"/><path d="M8 30l10-12.500 3.800 5z" fill="#fff"/>')],
  [tile('url(#gGreen)', '<ellipse cx="20" cy="19" rx="14.500" ry="12" fill="#f1f6f0"/><path d="M11 27l-1 6 8-3z" fill="#e3ebe2"/>'), 1, 6],
  [tile('url(#gBlueR)', '<rect x="6" y="11" width="28" height="18" rx="2" fill="#eff1f3"/><path d="m7 12 13 11 13-11M7 28l9-8M33 28l-9-8" fill="none" stroke="#8d949c" stroke-width="1.400"/>'), 1],
  [tile('#f2efe9', '<path d="M0 15 40 40H31L0 22zM23 0h8a9 9 0 0 1 9 9v7z" fill="#67c866"/><path d="M0 20v11a9 9 0 0 0 9 9h6z" fill="#dd87c3"/><path d="M20 40 28 30 36 38 31 40z" fill="#f3c640"/><path d="M11 0h8v17h-8z" fill="#2f74ea"/><circle cx="15" cy="25" r="9.500" fill="#2f74ea" stroke="#fff" stroke-width="1.500"/><path d="m15 18 5 12-5-3-5 3z" fill="#fff"/>')],
  [tile('#fbfbfb', petals)],
  [tile('url(#gGreen)', '<rect x="6" y="12" width="19" height="17" rx="4" fill="#f3f7f2"/><path d="M27 19l7-6v15l-7-6z" fill="#e4ece3"/>'), 1, 3],
  [tile('#f7f7f5', '<path d="M0 13V9a9 9 0 0 1 9-9h22a9 9 0 0 1 9 9v4z" fill="#e2574c"/><text x="20" y="10.500" text-anchor="middle" font-family="Inter" font-weight="700" font-size="8" fill="#fff">JUN</text><text x="20" y="33" text-anchor="middle" font-family="Inter" font-size="21" fill="#222">10</text>')],
  ['<path d="M34 8h7v6h-7z" fill="#e9e4da"/><path d="M34 14h7v6h-7z" fill="#55b4e6"/><path d="M34 21h7v6h-7z" fill="#ee9236"/><path d="M34 28h7v6h-7z" fill="#59b757"/>' + tile('url(#gTan)', '<circle cx="21" cy="20" r="12" fill="none" stroke="#8a6a3f" stroke-width="1.400"/><circle cx="21" cy="17" r="4.500" fill="#8a6a3f"/><path d="M12 28c3-7 15-7 18 0-5 5-13 5-18 0z" fill="#8a6a3f"/>')],
  [tile('#f8f8f7', '<circle cx="8" cy="10" r="3" fill="#3478f0"/><circle cx="8" cy="20" r="3" fill="#e8473f"/><circle cx="8" cy="30" r="3" fill="#f09b37"/><path d="M15 10h20M15 20h20M15 30h20" stroke="#cfcfcf" stroke-width="1.200"/>')],
  [tile('#f3f3f0', '<path d="M0 11V9a9 9 0 0 1 9-9h22a9 9 0 0 1 9 9v2z" fill="#f6c944"/><path d="M0 20h40M0 29h40" stroke="#d4d4d0" stroke-width="1.200"/>')],
  [tile('#fbfbfb', '<circle cx="15" cy="25" r="10" fill="#f0825f"/><rect x="14" y="5" width="21" height="21" rx="2" fill="#4fc0ee"/><path d="M7 22c4-10 8-10 7-3s5-6 8-4-2 7 3 5 7-2 10-5" fill="none" stroke="#153a5c" stroke-width="2.200"/>')],
  [tile('url(#gTv)', '<svg x="5" y="12" width="13" height="13" fill="#fff"><use href="#apple"/></svg><text x="18.500" y="25" font-family="Inter" font-weight="500" font-size="16" fill="#fff">tv</text>')],
  [tile('url(#gRed)', '<path d="M15 29V11l14-3v18" fill="none" stroke="#fff" stroke-width="2.400"/><path d="M15 10.500 29 7v4.500L15 15z" fill="#fff"/><ellipse cx="11.800" cy="29" rx="4.200" ry="3.500" fill="#fff"/><ellipse cx="25.500" cy="26.500" rx="4.200" ry="3.500" fill="#fff"/>')],
  [tile('#fcfcfc', '<path d="M8 8h9l15 13v11h-9L8 19z" fill="#ea4a60"/><path d="M8 22v10h11zM32 18V8H21z" fill="#ea4a60"/>')],
  [tile('url(#gBlue)', '<path d="M11 7h18l3 10H8z" fill="#fbfbfb"/><path d="M9 16h22v2H9z" fill="#d5d8dc"/><path d="M20 18v15M13 34h14" stroke="#f4f5f6" stroke-width="2"/><circle cx="20" cy="11.500" r="3.500" fill="#4f9fe8"/><path d="M20 11.500V8a3.500 3.500 0 0 1 3.500 3.500z" fill="#ee5a43"/>')],
  [tile('url(#gGreen)', '<path d="M8 26h5v8H8zM15 19h5v15h-5zM21.500 7h5v27h-5zM28 14h5v20h-5z" fill="#fff"/>')],
  [tile('url(#gOrange)', '<path d="M9 31c1-4 3-6 6-9L30 9c3-2 4 0 2 2L18 25c-3 3-5 5-9 6z" fill="#fafafa"/><path d="M7 34.500h26" stroke="#fff6e6" stroke-width="1.300"/>')],
  [tile('url(#gBlue)', '<path d="M22 9 12 27M17 9l12 22M7 25h16M28 25h5M10.500 29l-1.500 2.500" stroke="#fff" stroke-width="3" stroke-linecap="round"/>'), 1],
  [tile('url(#gGray)', '<circle cx="20" cy="20" r="15.500" fill="#4a4d50" stroke="#2f3234" stroke-width="2.500" stroke-dasharray="2 1"/><circle cx="20" cy="20" r="10.500" fill="none" stroke="#b9bcbf" stroke-width="2"/><path d="M20 20 10 14M20 20l11-1M20 20l-5 11" stroke="#b9bcbf" stroke-width="2"/><circle cx="20" cy="20" r="4" fill="#3a3d3f" stroke="#b9bcbf"/>'), 1],
  [tile('#b9b8b7', '<rect x="12" y="3" width="16" height="34" rx="2.500" fill="url(#gPhone)" stroke="#1c1c1c" stroke-width="1.200"/><path d="M17 4.500h6" stroke="#111" stroke-width="2"/>')],
  null,
  [tile('#f7f7f5', '<svg width="40" height="40"><use href="#chromeball"/></svg>'), 1],
  [tile('#fafafa', '<g stroke-width="3.600" fill="none"><path d="M13 9c-5 2-5 8 0 10v13" stroke="#f2c23d"/><path d="M19 9c-4 3-4 8 0 10v14" stroke="#63bd5c"/><circle cx="26" cy="13" r="5" stroke="#3a8ff0" stroke-width="5"/><path d="M26 19v14M26 24h4M26 30h4" stroke="#3a7df0"/></g>'), 1],
  [tile('#b9d0cf', '<rect x="2" y="2" width="36" height="36" rx="7" fill="#101010"/><rect x="4.500" y="4.500" width="31" height="31" rx="5" fill="#262626"/><path d="m8 9 4 2.200-4 2.200M14 15.500h6" fill="none" stroke="#eee" stroke-width="1.500"/>'), 1],
  [tile('#fdfdfd', '<rect x="13" y="7" width="20" height="25" rx="1.500" fill="#2f8ae0"/><path d="M20 7h13v9H20z" fill="#49b6ee"/><path d="M11 20l11 7 11-7v12H11z" fill="#6cc4f2"/><rect x="4" y="13" width="14" height="14" rx="1" fill="#1767b8"/><circle cx="11" cy="20" r="3.500" fill="none" stroke="#fff" stroke-width="2"/>'), 1],
  [tile('#fdfdfd', '<circle cx="20" cy="10" r="4" fill="#7b83eb"/><circle cx="30" cy="11" r="3" fill="#5059c9"/><rect x="25" y="15" width="9" height="13" rx="4" fill="#5059c9"/><rect x="13" y="15" width="15" height="18" rx="6" fill="#7b83eb"/><rect x="5" y="13" width="14" height="14" rx="1" fill="#4b53bc"/><path d="M8.500 17h7M12 17v7.500" stroke="#fff" stroke-width="2"/>'), 1],
  [tile('#f3f3f3', '<rect x="3" y="3" width="34" height="34" rx="6" fill="#a6c3ef"/><path d="M3 20h34v6H3z" fill="#2c4f86"/><path d="M3 26h34v5c0 4-2 6-6 6H9c-4 0-6-2-6-6z" fill="#d9d5cc"/><rect x="21" y="19" width="16" height="8" rx="2" fill="#1d1d1d"/><path d="M20 27h18l2 12H18z" fill="#e6e6e6"/>'), 1],
  [tile('#bcc3d3', '<circle cx="20" cy="20" r="16" fill="#fff"/><circle cx="20" cy="20" r="12.500" fill="none" stroke="#2c67e2" stroke-width="4.500"/><rect x="17" y="13" width="6" height="14" rx="1" fill="#1a2230"/>'), 1],
  null,
  ['<rect x="2" y="3" width="36" height="37" rx="1.500" fill="#f4f3f1"/><path d="M2 16V5l3-3h30l3 3v11z" fill="#dd4f44"/><text x="20" y="14" text-anchor="middle" font-family="Inter" font-weight="700" font-size="8" fill="#fff">JUN</text><text x="20" y="30" text-anchor="middle" font-family="Inter" font-size="16" fill="#222">5</text><path d="M14 34h12M13 37h14" stroke="#999" stroke-width=".8"/>'],
  [thumb('#22252b', '<path d="M10 12h20M14 10h12" stroke="#777" stroke-width=".8"/><circle cx="8" cy="19" r="2" fill="#c98a3e"/><circle cx="16" cy="19" r="2" fill="#3f9b7c"/><circle cx="24" cy="19" r="2" fill="#555"/><circle cx="32" cy="19" r="2" fill="#7a5bd0"/><circle cx="8" cy="27" r="2" fill="#999"/>', miniChrome)],
  [thumb('#f3f5f8', '<path d="M-3 4h46v2H-3z" fill="#333"/><path d="M10 11h8M10 14h8M10 18h8M21 11h8M21 14h8M21 18h8M12 23h14" stroke="#888" stroke-width="1"/>', miniChrome)],
  [thumb('#2b2b2b', '<rect x="-1" y="7" width="4" height="5" fill="#fff"/><rect x="-1" y="15" width="4" height="5" fill="#fff"/><rect x="14" y="6" width="20" height="27" fill="#f4f4f4"/><path d="M17 10h14M17 14h12M17 18h13M17 22h10" stroke="#999" stroke-width=".8"/>', '<rect x="28" y="27" width="14" height="14" rx="3" fill="#a6c3ef"/><path d="M28 34h14v3H28z" fill="#2c4f86"/>')],
  ['<path d="M3 4h34l-4 33c-1 4-25 4-26 0z" fill="url(#gTrash)"/><ellipse cx="20" cy="5" rx="17" ry="4.500" fill="#55595b"/><path d="M7 5l5-5 5 4 5-5 5 5 5-2 2 4c-8 3-19 3-27-1z" fill="#e8e8e6"/><path d="M14 4l3-2 2 3zM24 5l3-3 2 3z" fill="#6c8e5a"/>'],
];
document.getElementById('dock').innerHTML = dock.map(d => d ? `
  <div class="relative flex h-[50.48px] shrink-0 items-center pl-[16px]">${d[1] ? '<i class="absolute left-[2px] size-[6px] rounded-full bg-[#a9a9a4]"></i>' : ''}<svg class="size-[38px] overflow-visible" viewBox="0 0 40 40">${d[0]}</svg>${d[2] ? `<b class="absolute top-0 right-[6px] flex size-[18px] items-center justify-center rounded-full bg-[#dd4a3e] text-[11px] font-medium text-white">${d[2]}</b>` : ''}</div>` : '<div class="flex h-[23.5px] shrink-0 items-center pl-[8px]"><i class="h-[2px] w-[48px] bg-white/30"></i></div>').join('');
</script>
</body>
</html>
